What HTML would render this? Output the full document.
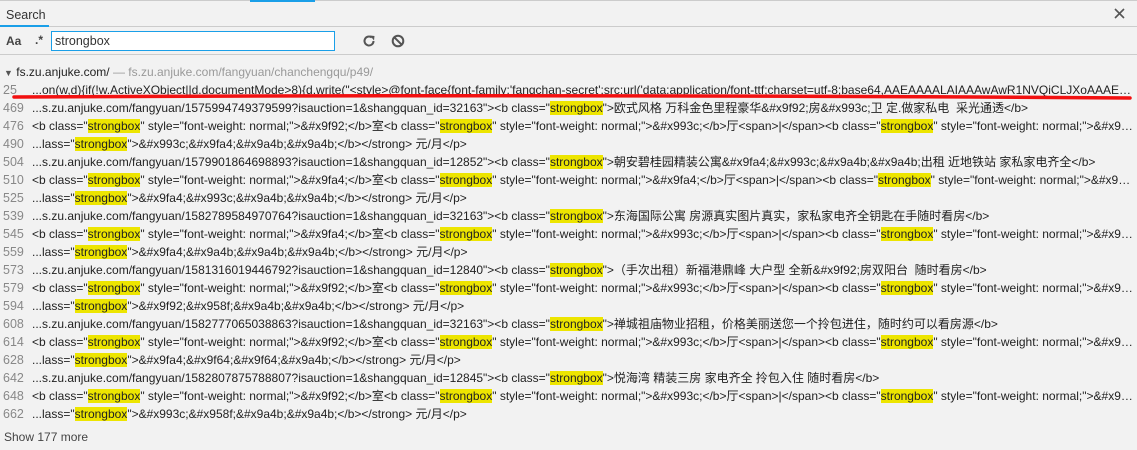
<!DOCTYPE html>
<html><head><meta charset="utf-8"><style>
*{margin:0;padding:0;box-sizing:border-box}
body{width:1137px;height:450px;background:#f2f2f2;font-family:"Liberation Sans","Noto Sans CJK SC",sans-serif;font-size:12px;color:#222;position:relative;overflow:hidden}
.top{position:absolute;left:0;top:0;width:1137px;height:27px;border-top:1px solid #ccc;border-bottom:1px solid #ccc}
.top .blue{position:absolute;left:250px;top:-1px;width:65px;height:2px;background:#1a9fe8}
.tab{position:absolute;left:0;top:0;width:49px;height:26px;border-bottom:2px solid #1a9fe8;padding:7px 0 0 6px;font-size:12.5px;color:#333}
.x{position:absolute;left:1114px;top:7px}
.bar{position:absolute;left:0;top:27px;width:1137px;height:28px;border-bottom:1px solid #ccc}
.aa{position:absolute;left:6px;top:7px;font-weight:bold;color:#444}
.re{position:absolute;left:35px;top:6px;color:#444;font-weight:bold}
.inp{position:absolute;left:51px;top:4px;width:284px;height:20px;border:1px solid #1a9fe8;background:#fff;padding:2px 0 0 3px;color:#333;font-size:12.5px}
.rows{position:absolute;left:0;top:63px;width:1137px}
.r{height:18px;line-height:18px;white-space:nowrap;overflow:hidden;position:relative;padding-left:32px;width:1133px;text-overflow:ellipsis}
.r .n{position:absolute;left:3px;top:0;color:#888;font-size:12.5px}
.h{background:#ede500}
.g{color:#999}
.more{position:absolute;left:4px;top:430px;color:#444}
</style></head><body>
<div class="top"><div class="blue"></div><div class="tab">Search</div>
<svg class="x" width="11" height="11" viewBox="0 0 11 11"><path d="M1 1L10 10M10 1L1 10" stroke="#555" stroke-width="1.6"/></svg></div>
<div class="bar"><span class="aa">Aa</span><span class="re">.*</span><div class="inp">strongbox</div>
<svg style="position:absolute;left:362px;top:7px" width="14" height="14" viewBox="0 0 14 14"><path d="M11.5 7A4.5 4.5 0 1 1 9.8 3.5" fill="none" stroke="#555" stroke-width="2"/><path d="M8 1.5L12.5 2L12 6.5Z" fill="#555"/></svg>
<svg style="position:absolute;left:391px;top:7px" width="14" height="14" viewBox="0 0 14 14"><circle cx="7" cy="7" r="5.3" fill="none" stroke="#555" stroke-width="2"/><path d="M3.3 3.3L10.7 10.7" stroke="#555" stroke-width="2"/></svg>
</div>
<div class="rows">
<div class="r" style="padding-left:4px"><span style="font-size:9px;color:#555">▼</span> fs.zu.anjuke.com/ <span class="g">— fs.zu.anjuke.com/fangyuan/chanchengqu/p49/</span></div>
<div class="r"><span class="n">25</span>...on(w,d){if(!w.ActiveXObject||d.documentMode&gt;8){d.write("&lt;style&gt;@font-face{font-family:'fangchan-secret';src:url('data:application/font-ttf;charset=utf-8;base64,AAEAAAALAIAAAwAwR1NVQiCLJXoAAAE4AAAAVE9TLzL4XQjt</div>
<div class="r"><span class="n">469</span>...s.zu.anjuke.com/fangyuan/1575994749379599?isauction=1&amp;shangquan_id=32163"&gt;&lt;b class="<span class="h">strongbox</span>"&gt;欧式风格 万科金色里程豪华&amp;#x9f92;房&amp;#x993c;卫 定.做家私电&nbsp; 采光通透&lt;/b&gt;</div>
<div class="r"><span class="n">476</span>&lt;b class="<span class="h">strongbox</span>" style="font-weight: normal;"&gt;&amp;#x9f92;&lt;/b&gt;室&lt;b class="<span class="h">strongbox</span>" style="font-weight: normal;"&gt;&amp;#x993c;&lt;/b&gt;厅&lt;span&gt;|&lt;/span&gt;&lt;b class="<span class="h">strongbox</span>" style="font-weight: normal;"&gt;&amp;#x9f92;</div>
<div class="r"><span class="n">490</span>...lass="<span class="h">strongbox</span>"&gt;&amp;#x993c;&amp;#x9fa4;&amp;#x9a4b;&amp;#x9a4b;&lt;/b&gt;&lt;/strong&gt; 元/月&lt;/p&gt;</div>
<div class="r"><span class="n">504</span>...s.zu.anjuke.com/fangyuan/1579901864698893?isauction=1&amp;shangquan_id=12852"&gt;&lt;b class="<span class="h">strongbox</span>"&gt;朝安碧桂园精装公寓&amp;#x9fa4;&amp;#x993c;&amp;#x9a4b;&amp;#x9a4b;出租 近地铁站 家私家电齐全&lt;/b&gt;</div>
<div class="r"><span class="n">510</span>&lt;b class="<span class="h">strongbox</span>" style="font-weight: normal;"&gt;&amp;#x9fa4;&lt;/b&gt;室&lt;b class="<span class="h">strongbox</span>" style="font-weight: normal;"&gt;&amp;#x9fa4;&lt;/b&gt;厅&lt;span&gt;|&lt;/span&gt;&lt;b class="<span class="h">strongbox</span>" style="font-weight: normal;"&gt;&amp;#x9fa4;</div>
<div class="r"><span class="n">525</span>...lass="<span class="h">strongbox</span>"&gt;&amp;#x9fa4;&amp;#x993c;&amp;#x9a4b;&amp;#x9a4b;&lt;/b&gt;&lt;/strong&gt; 元/月&lt;/p&gt;</div>
<div class="r"><span class="n">539</span>...s.zu.anjuke.com/fangyuan/1582789584970764?isauction=1&amp;shangquan_id=32163"&gt;&lt;b class="<span class="h">strongbox</span>"&gt;东海国际公寓 房源真实图片真实，家私家电齐全钥匙在手随时看房&lt;/b&gt;</div>
<div class="r"><span class="n">545</span>&lt;b class="<span class="h">strongbox</span>" style="font-weight: normal;"&gt;&amp;#x9fa4;&lt;/b&gt;室&lt;b class="<span class="h">strongbox</span>" style="font-weight: normal;"&gt;&amp;#x993c;&lt;/b&gt;厅&lt;span&gt;|&lt;/span&gt;&lt;b class="<span class="h">strongbox</span>" style="font-weight: normal;"&gt;&amp;#x9fa4;</div>
<div class="r"><span class="n">559</span>...lass="<span class="h">strongbox</span>"&gt;&amp;#x9fa4;&amp;#x9a4b;&amp;#x9a4b;&amp;#x9a4b;&lt;/b&gt;&lt;/strong&gt; 元/月&lt;/p&gt;</div>
<div class="r"><span class="n">573</span>...s.zu.anjuke.com/fangyuan/1581316019446792?isauction=1&amp;shangquan_id=12840"&gt;&lt;b class="<span class="h">strongbox</span>"&gt;（手次出租）新福港鼎峰 大户型 全新&amp;#x9f92;房双阳台&nbsp; 随时看房&lt;/b&gt;</div>
<div class="r"><span class="n">579</span>&lt;b class="<span class="h">strongbox</span>" style="font-weight: normal;"&gt;&amp;#x9f92;&lt;/b&gt;室&lt;b class="<span class="h">strongbox</span>" style="font-weight: normal;"&gt;&amp;#x993c;&lt;/b&gt;厅&lt;span&gt;|&lt;/span&gt;&lt;b class="<span class="h">strongbox</span>" style="font-weight: normal;"&gt;&amp;#x9f92;</div>
<div class="r"><span class="n">594</span>...lass="<span class="h">strongbox</span>"&gt;&amp;#x9f92;&amp;#x958f;&amp;#x9a4b;&amp;#x9a4b;&lt;/b&gt;&lt;/strong&gt; 元/月&lt;/p&gt;</div>
<div class="r"><span class="n">608</span>...s.zu.anjuke.com/fangyuan/1582777065038863?isauction=1&amp;shangquan_id=32163"&gt;&lt;b class="<span class="h">strongbox</span>"&gt;禅城祖庙物业招租，价格美丽送您一个拎包进住，随时约可以看房源&lt;/b&gt;</div>
<div class="r"><span class="n">614</span>&lt;b class="<span class="h">strongbox</span>" style="font-weight: normal;"&gt;&amp;#x9f92;&lt;/b&gt;室&lt;b class="<span class="h">strongbox</span>" style="font-weight: normal;"&gt;&amp;#x993c;&lt;/b&gt;厅&lt;span&gt;|&lt;/span&gt;&lt;b class="<span class="h">strongbox</span>" style="font-weight: normal;"&gt;&amp;#x9f92;</div>
<div class="r"><span class="n">628</span>...lass="<span class="h">strongbox</span>"&gt;&amp;#x9fa4;&amp;#x9f64;&amp;#x9f64;&amp;#x9a4b;&lt;/b&gt;&lt;/strong&gt; 元/月&lt;/p&gt;</div>
<div class="r"><span class="n">642</span>...s.zu.anjuke.com/fangyuan/1582807875788807?isauction=1&amp;shangquan_id=12845"&gt;&lt;b class="<span class="h">strongbox</span>"&gt;悦海湾 精装三房 家电齐全 拎包入住 随时看房&lt;/b&gt;</div>
<div class="r"><span class="n">648</span>&lt;b class="<span class="h">strongbox</span>" style="font-weight: normal;"&gt;&amp;#x9f92;&lt;/b&gt;室&lt;b class="<span class="h">strongbox</span>" style="font-weight: normal;"&gt;&amp;#x993c;&lt;/b&gt;厅&lt;span&gt;|&lt;/span&gt;&lt;b class="<span class="h">strongbox</span>" style="font-weight: normal;"&gt;&amp;#x9f92;</div>
<div class="r"><span class="n">662</span>...lass="<span class="h">strongbox</span>"&gt;&amp;#x993c;&amp;#x958f;&amp;#x9a4b;&amp;#x9a4b;&lt;/b&gt;&lt;/strong&gt; 元/月&lt;/p&gt;</div>
</div>
<svg style="position:absolute;left:0;top:90px" width="1137" height="14"><path d="M14 7 Q560 4 1130 8" stroke="#f21010" stroke-width="3.5" fill="none" stroke-linecap="round"/></svg>
<div class="more">Show 177 more</div>
</body></html>
